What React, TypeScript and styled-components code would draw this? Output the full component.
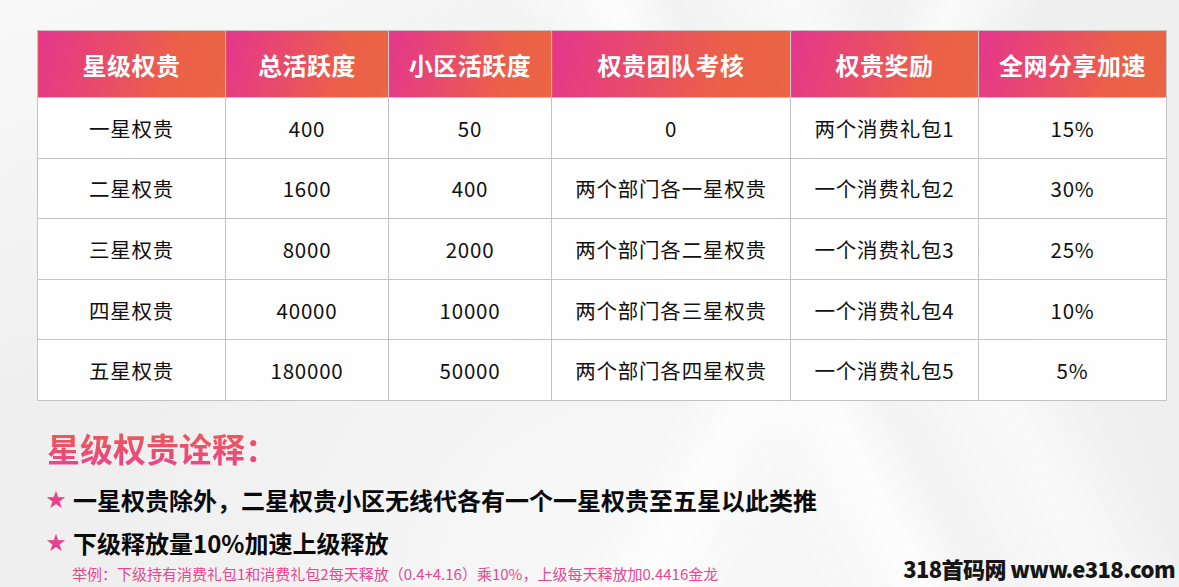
import React from "react";
import styled, { createGlobalStyle } from "styled-components";

const GlobalStyle = createGlobalStyle`
  html, body { margin: 0; padding: 0; }
  body {
    font-family: "Noto Sans CJK SC", "Noto Sans", sans-serif;
    background: #f1f1f1;
  }
`;

const Page = styled.div`
  width: 1179px;
  height: 587px;
  overflow: hidden;
  box-sizing: border-box;
  padding: 30px 13px 0 37px;
  display: flex;
  flex-direction: column;
  background:
    linear-gradient(118deg, rgba(255,255,255,0) 0%, rgba(255,255,255,0) 60%, rgba(255,255,255,0.7) 64%, rgba(255,255,255,0) 70%),
    linear-gradient(62deg, rgba(255,255,255,0) 55%, rgba(255,255,255,0.8) 62%, rgba(255,255,255,0) 66%, rgba(255,255,255,0.6) 74%, rgba(255,255,255,0) 80%),
    linear-gradient(160deg, rgba(255,255,255,0.6) 0%, rgba(235,235,235,0) 40%),
    radial-gradient(ellipse at 55% 100%, #f9f9f9 0%, #efefef 60%),
    #eeeeee;
`;

const Table = styled.table`
  width: 1129px;
  border-collapse: collapse;
  table-layout: fixed;
  border: 1px solid #c3c3c3;
`;

const Col = styled.col<{ $w: number }>`
  width: ${(p) => p.$w}px;
`;

const HeadCell = styled.th`
  height: 66px;
  padding: 0;
  border: 1px solid #c3c3c3;
  background: linear-gradient(105deg, #e4368c 0%, #e84a6c 35%, #eb6048 70%, #eb6444 100%);
  color: #ffffff;
  font-size: 24px;
  font-weight: 700;
  text-align: center;
  vertical-align: middle;
  letter-spacing: 0.5px;
`;

const BodyRow = styled.tr`
  height: 60.6px;
`;

const Cell = styled.td`
  padding: 0;
  border: 1px solid #c3c3c3;
  background: rgba(255, 255, 255, 0.92);
  color: #111111;
  font-size: 20.5px;
  text-align: center;
  vertical-align: middle;
  letter-spacing: 0.8px;
`;

const Notes = styled.section`
  display: flex;
  flex-direction: column;
  padding: 27px 0 0 10px;
  position: relative;
`;

const Title = styled.h2`
  margin: 0;
  font-size: 33px;
  line-height: 40px;
  font-weight: 700;
  background: linear-gradient(180deg, #ef5c4e 0%, #eb4a78 70%, #e9458e 100%);
  -webkit-background-clip: text;
  background-clip: text;
  color: transparent;
  width: fit-content;
`;

const Bullet = styled.div<{ $mt: number }>`
  display: flex;
  align-items: center;
  gap: 8px;
  margin-top: ${(p) => p.$mt}px;
  height: 32px;
`;

const Star = styled.span`
  color: #e8418e;
  font-family: "DejaVu Sans", sans-serif;
  font-size: 24px;
  line-height: 1;
  width: 18px;
  display: inline-flex;
  justify-content: center;
`;

const BulletText = styled.span`
  font-size: 24px;
  font-weight: 700;
  color: #0a0a0a;
  line-height: 32px;
`;

const Example = styled.div`
  margin-top: 5px;
  padding-left: 25px;
  font-size: 15px;
  line-height: 20px;
  color: #e8478f;
`;

const Watermark = styled.div`
  position: absolute;
  right: -9px;
  bottom: 3px;
  font-family: "Noto Sans CJK SC", "Open Sans", sans-serif;
  font-size: 22px;
  font-weight: 900;
  color: #161616;
  letter-spacing: -0.6px;
  line-height: 26px;
`;

const headers = ["星级权贵", "总活跃度", "小区活跃度", "权贵团队考核", "权贵奖励", "全网分享加速"];
const widths = [188, 163, 163, 239, 188, 188];
const rows = [
  ["一星权贵", "400", "50", "0", "两个消费礼包1", "15%"],
  ["二星权贵", "1600", "400", "两个部门各一星权贵", "一个消费礼包2", "30%"],
  ["三星权贵", "8000", "2000", "两个部门各二星权贵", "一个消费礼包3", "25%"],
  ["四星权贵", "40000", "10000", "两个部门各三星权贵", "一个消费礼包4", "10%"],
  ["五星权贵", "180000", "50000", "两个部门各四星权贵", "一个消费礼包5", "5%"],
];

export default function App() {
  return (
    <>
      <GlobalStyle />
      <Page>
        <Table>
          <colgroup>
            {widths.map((w, i) => (
              <Col key={i} $w={w} />
            ))}
          </colgroup>
          <thead>
            <tr>
              {headers.map((h) => (
                <HeadCell key={h}>{h}</HeadCell>
              ))}
            </tr>
          </thead>
          <tbody>
            {rows.map((r, i) => (
              <BodyRow key={i}>
                {r.map((c, j) => (
                  <Cell key={j}>{c}</Cell>
                ))}
              </BodyRow>
            ))}
          </tbody>
        </Table>
        <Notes>
          <Title>星级权贵诠释：</Title>
          <Bullet $mt={16}>
            <Star>★</Star>
            <BulletText>一星权贵除外，二星权贵小区无线代各有一个一星权贵至五星以此类推</BulletText>
          </Bullet>
          <Bullet $mt={11}>
            <Star>★</Star>
            <BulletText>下级释放量10%加速上级释放</BulletText>
          </Bullet>
          <Example>举例：下级持有消费礼包1和消费礼包2每天释放（0.4+4.16）乘10%，上级每天释放加0.4416金龙</Example>
          <Watermark>318首码网 www.e318.com</Watermark>
        </Notes>
      </Page>
    </>
  );
}
